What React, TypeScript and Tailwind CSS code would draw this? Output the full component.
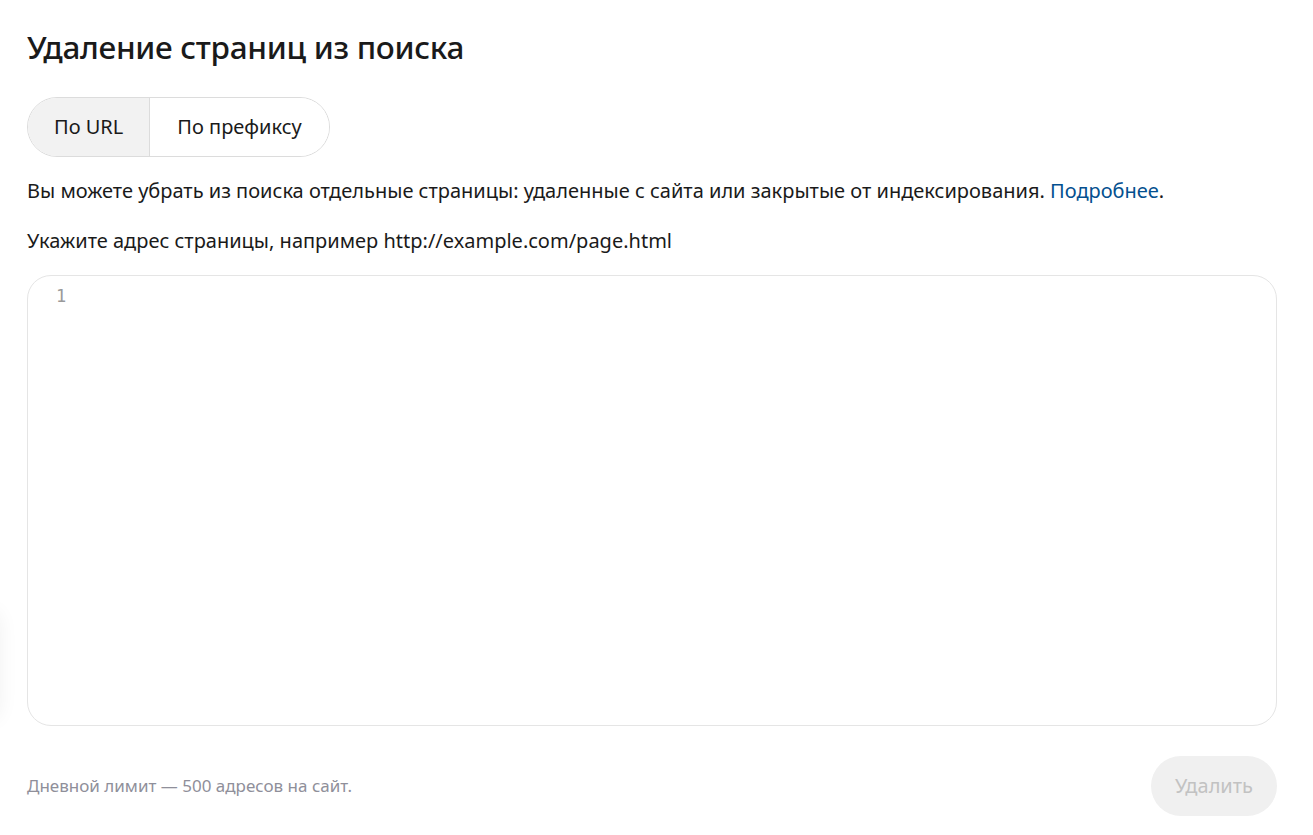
import React from "react";

export default function App() {
  return (
    <div className="min-h-[835px] w-full bg-white text-[#1a1a1a] relative overflow-hidden" style={{ fontFamily: '"Noto Sans", "Open Sans", sans-serif' }}>
      <div className="absolute left-[-40px] top-[610px] h-[110px] w-[40px] rounded-[14px] shadow-[0_0_20px_rgba(0,0,0,0.06)] bg-white" />
      <div className="px-[27px] pt-[26px] pr-[36px]">
        <h1 className="text-[31.5px] leading-[42px] font-medium tracking-[-0.3px]">Удаление страниц из поиска</h1>
        <div className="mt-[29px] inline-flex h-[60px] rounded-full border border-[#dcdcdc] overflow-hidden text-[20px]">
          <button className="px-[26px] bg-[#f2f2f2] border-r border-[#dcdcdc]">По URL</button>
          <button className="px-[27px] bg-white">По префиксу</button>
        </div>
        <p className="mt-[20px] text-[20px] leading-[28px]">
          Вы можете убрать из поиска отдельные страницы: удаленные с сайта или закрытые от индексирования.{" "}
          <a className="text-[#04508f]">Подробнее</a>.
        </p>
        <p className="mt-[22px] text-[20px] leading-[28px]">Укажите адрес страницы, например http://example.com/page.html</p>
        <div className="mt-[20px] h-[451px] rounded-[24px] border border-[#e5e5e5] pl-[28px] pt-[8px]">
          <span className="text-[17px] text-[#9a9a9a]" style={{ fontFamily: '"DejaVu Sans Mono", monospace' }}>1</span>
        </div>
        <div className="mt-[30px] flex items-center justify-between">
          <span className="text-[17px] text-[#8f8f9a]">Дневной лимит — 500 адресов на сайт.</span>
          <button className="h-[60px] px-[24px] rounded-full bg-[#f0f0f0] text-[20px] text-[#c2c2c2]">Удалить</button>
        </div>
      </div>
    </div>
  );
}
